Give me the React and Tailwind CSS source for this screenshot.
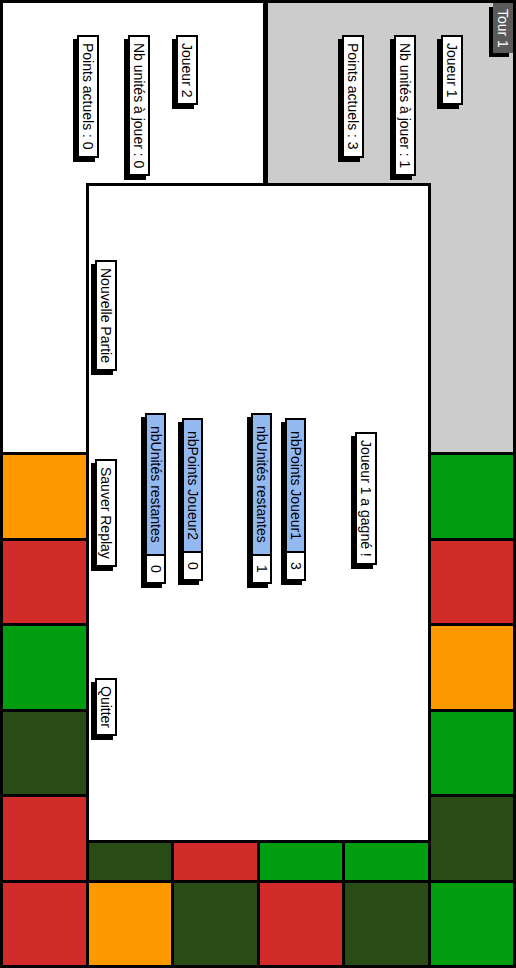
import React from "react";

const ORANGE = "bg-[#ff9900]";
const RED = "bg-[#d12b2a]";
const GREEN = "bg-[#009d10]";
const DARK = "bg-[#294c16]";
const HIDDEN = "bg-white";

const board = [
  [ORANGE, HIDDEN, HIDDEN, HIDDEN, HIDDEN, GREEN],
  [RED, HIDDEN, HIDDEN, HIDDEN, HIDDEN, RED],
  [GREEN, HIDDEN, HIDDEN, HIDDEN, HIDDEN, ORANGE],
  [DARK, HIDDEN, HIDDEN, HIDDEN, HIDDEN, GREEN],
  [RED, DARK, RED, GREEN, GREEN, DARK],
  [RED, ORANGE, DARK, RED, DARK, GREEN],
];

const Label = ({ children, className = "" }) => (
  <div
    className={`[writing-mode:vertical-rl] bg-white border-2 border-black shadow-[-4px_4px_0_#000] text-[14px] leading-[16px] pl-px pr-px pt-[6px] pb-[6px] text-black whitespace-nowrap ${className}`}
  >
    {children}
  </div>
);

const Stat = ({ label, value, className = "" }) => (
  <div className={`flex flex-col w-[21px] shadow-[-4px_4px_0_#000] ${className}`}>
    <div className="[writing-mode:vertical-rl] bg-[#94b9f1] border-2 border-black text-[14px] leading-[17px] pt-[11px] pb-[11px] text-black whitespace-nowrap">
      {label}
    </div>
    <div className="flex items-center justify-center h-[28px] bg-white border-2 border-t-0 border-black">
      <span className="[writing-mode:vertical-rl] text-[14px] leading-[16px] text-black">
        {value}
      </span>
    </div>
  </div>
);

export default function App() {
  return (
    <div className="relative w-[516px] h-[968px] bg-black p-[3px] flex flex-col gap-[3px] overflow-hidden font-['Liberation_Sans',Arial,sans-serif]">
      <div className="flex h-[449px] gap-[5px]">
        <div className="w-[260px] bg-white flex flex-row-reverse items-start pr-[65px]">
          <Label className="mt-[32px]">Joueur 2</Label>
          <Label className="mt-[32px] mr-[26px]">Nb unités à jouer : 0</Label>
          <Label className="mt-[32px] mr-[29px]">Points actuels : 0</Label>
        </div>
        <div className="flex-1 bg-[#cccccc] flex flex-row-reverse items-start">
          <div className="[writing-mode:vertical-rl] w-[20px] h-[50px] bg-[#5a5a5a] text-white text-[14px] leading-[20px] flex items-center justify-center shadow-[-4px_4px_0_#000]">
            Tour 1
          </div>
          <Label className="mt-[32px] mr-[30px]">Joueur 1</Label>
          <Label className="mt-[32px] mr-[25px]">Nb unités à jouer : 1</Label>
          <Label className="mt-[32px] mr-[30px]">Points actuels : 3</Label>
        </div>
      </div>

      <div className="flex-1 grid grid-cols-6 grid-rows-6 gap-[3px]">
        {board.flatMap((row, r) =>
          row.map((color, c) => <div key={`${r}-${c}`} className={color} />)
        )}
      </div>

      <div className="absolute left-[86px] top-[183px] w-[345px] h-[660px] bg-white border-[3px] border-black flex items-start">
        <div className="ml-[6px] mt-[74px] flex flex-col">
          <Label>Nouvelle Partie</Label>
          <Label className="mt-[88px]">Sauver Replay</Label>
          <Label className="mt-[111px]">Quitter</Label>
        </div>
        <Stat label="nbUnités restantes" value="0" className="ml-[28px] mt-[227px]" />
        <Stat label="nbPoints Joueur2" value="0" className="ml-[16px] mt-[232px]" />
        <Stat label="nbUnités restantes" value="1" className="ml-[48px] mt-[227px]" />
        <Stat label="nbPoints Joueur1" value="3" className="ml-[13px] mt-[232px]" />
        <Label className="ml-[49px] mt-[246px]">Joueur 1 a gagné !</Label>
      </div>
    </div>
  );
}
